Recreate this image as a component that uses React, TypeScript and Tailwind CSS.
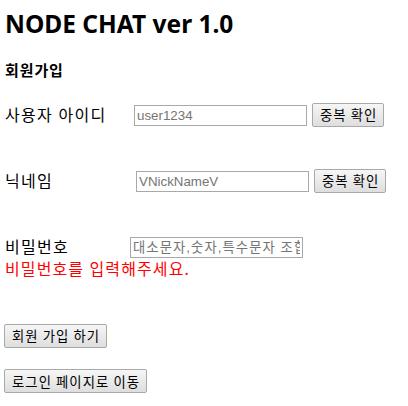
import * as React from 'react';

const kr = "font-['Noto_Sans','Noto_Sans_CJK_KR',sans-serif]";
const inputCls =
  "h-[21px] w-[173px] border border-[#a9a9a9] px-[2px] text-[13.33px] text-[#757575] font-['Liberation_Sans','Noto_Sans_CJK_KR',sans-serif] outline-none placeholder:text-[#757575]";
const btnCls =
  "h-[24px] border border-[#a9a9a9] rounded-[2px] bg-gradient-to-b from-[#f6f6f6] to-[#dedede] pl-[7px] pr-[6px] text-[13.33px] tracking-[0.08em] text-black font-['Noto_Sans_CJK_KR',sans-serif] leading-none";

const App: React.FC = () => {
  return (
    <div className={`w-[408px] h-[406px] bg-white text-black pl-[5px] ${kr}`}>
      <h1 className="pt-[9px] text-[24.5px] font-bold leading-[30px]">NODE CHAT ver 1.0</h1>
      <h3 className="mt-[21px] text-[15px] font-bold leading-[20px] tracking-[0.06em]">회원가입</h3>

      <div className="mt-[23px] flex items-center h-[24px]">
        <span className="w-[129px] text-[16px] tracking-[0.08em]">사용자 아이디</span>
        <input className={inputCls} placeholder="user1234" />
        <button className={`${btnCls} ml-[5px]`}>중복 확인</button>
      </div>

      <div className="mt-[42px] flex items-center h-[24px]">
        <span className="w-[131px] text-[16px] tracking-[0.08em]">닉네임</span>
        <input className={inputCls} placeholder="VNickNameV" />
        <button className={`${btnCls} ml-[5px]`}>중복 확인</button>
      </div>

      <div className="mt-[43px] flex items-center h-[22px]">
        <span className="w-[125px] text-[16px] tracking-[0.08em]">비밀번호</span>
        <input className={`${inputCls} tracking-[0.08em]`} placeholder="대소문자,숫자,특수문자 조합" />
      </div>
      <div className="text-[16px] text-[#ff0000] leading-[22px] tracking-[0.07em]">비밀번호를 입력해주세요.</div>

      <div className="mt-[43px]">
        <button className={`${btnCls} -ml-[1px]`}>회원 가입 하기</button>
      </div>
      <div className="mt-[21px]">
        <button className={`${btnCls} -ml-[1px]`}>로그인 페이지로 이동</button>
      </div>
    </div>
  );
};

export default App;
